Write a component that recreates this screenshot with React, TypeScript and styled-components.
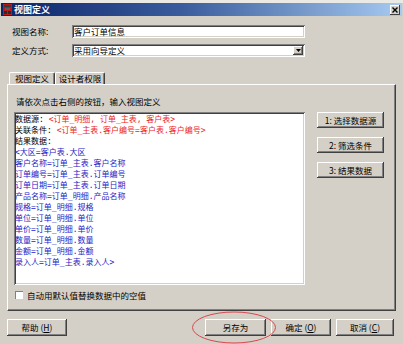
import React from "react";
import styled, { createGlobalStyle } from "styled-components";

const Global = createGlobalStyle`
  html, body { margin: 0; padding: 0; background: #d4d0c8; overflow: hidden; }
  * { box-sizing: border-box; }
`;

const FONT = `"Noto Sans CJK SC", "Liberation Sans", sans-serif`;
const MONO_CJK = `"DejaVu Sans Mono", "Noto Sans CJK SC", monospace`;

const Window = styled.div`
  position: relative;
  width: 403px;
  height: 344px;
  background: #d4d0c8;
  display: flex;
  flex-direction: column;
  font-family: ${FONT};
  font-size: 8.5px;
  color: #000;
  overflow: hidden;
`;

const TopStrip = styled.div`
  height: 3px;
  background: #ebe9e4;
`;

const TitleBar = styled.div`
  height: 13px;
  margin: 0 1px;
  background: linear-gradient(to right, #0a246a 0%, #3a5c9c 45%, #a6caf0 100%);
  display: flex;
  align-items: center;
  padding: 0 2px 0 2px;
`;

const TitleText = styled.span`
  color: #fff;
  font-weight: bold;
  font-size: 9px;
  line-height: 13px;
  margin-left: 2px;
  flex: 1;
`;

const CloseBtn = styled.div`
  width: 10px;
  height: 10px;
  background: #d4d0c8;
  box-shadow: inset -1px -1px #404040, inset 1px 1px #fff;
  display: flex;
  align-items: center;
  justify-content: center;
`;

const Form = styled.div`
  margin-top: 9px;
  padding-left: 12px;
  display: flex;
  flex-direction: column;
  gap: 6px;
`;

const FormRow = styled.div`
  display: flex;
  align-items: center;
  height: 13px;
`;

const Label = styled.span`
  width: 60px;
  line-height: 13px;
`;

const Field = styled.div`
  position: relative;
  width: 233px;
  height: 13px;
  background: #fff;
  box-shadow: inset 1px 1px #808080, inset -1px -1px #fff, inset 2px 2px #404040,
    inset -2px -2px #d4d0c8;
  padding: 0 2px;
  line-height: 13px;
  display: flex;
  align-items: center;
`;

const FieldText = styled.span`
  flex: 1;
`;

const DropBtn = styled.div`
  width: 10px;
  height: 9px;
  background: #d4d0c8;
  box-shadow: inset -1px -1px #404040, inset 1px 1px #fff, inset -2px -2px #808080;
  display: flex;
  align-items: center;
  justify-content: center;
`;

const Tabs = styled.div`
  margin-top: 15px;
  margin-left: 9px;
  display: flex;
  height: 12px;
`;

const Tab = styled.div<{ $w: number }>`
  width: ${(p) => p.$w}px;
  height: 12px;
  border-top: 1px solid #fff;
  border-left: 1px solid #fff;
  border-right: 1px solid #404040;
  box-shadow: inset -1px 0 #808080;
  border-radius: 2px 2px 0 0;
  display: flex;
  align-items: center;
  justify-content: center;
  line-height: 11px;
  background: #d4d0c8;
`;

const Panel = styled.div`
  margin: 0 7px;
  height: 227px;
  border: 1px solid;
  border-color: #fff #404040 #404040 #fff;
  box-shadow: inset -1px -1px #808080;
  padding: 11px 0 0 6px;
  display: flex;
  flex-direction: column;
`;

const Instruction = styled.div`
  padding-left: 2px;
  line-height: 11px;
  height: 11px;
`;

const Main = styled.div`
  margin-top: 5px;
  display: flex;
  align-items: flex-start;
`;

const TextArea = styled.div`
  width: 291px;
  height: 173px;
  background: #fff;
  box-shadow: inset 1px 1px #808080, inset -1px -1px #fff, inset 2px 2px #404040,
    inset -2px -2px #d4d0c8;
  padding: 2px 1px;
  font-family: ${MONO_CJK};
  font-size: 8px;
  line-height: 11px;
  overflow: hidden;
`;

const Line = styled.div`
  height: 11px;
  white-space: pre;
`;

const Red = styled.span`
  color: #ec2424;
`;

const Blue = styled.span`
  color: #2424c8;
`;

const SideButtons = styled.div`
  margin-left: 12px;
  display: flex;
  flex-direction: column;
  gap: 9px;
`;

const Button = styled.div<{ $w: number; $h?: number }>`
  width: ${(p) => p.$w}px;
  height: ${(p) => p.$h ?? 16}px;
  background: #d4d0c8;
  box-shadow: inset -1px -1px #404040, inset 1px 1px #fff, inset -2px -2px #808080;
  display: flex;
  align-items: center;
  justify-content: center;
  line-height: 11px;
  white-space: pre;
`;

const CheckRow = styled.div`
  margin-top: 5px;
  padding-left: 1px;
  display: flex;
  align-items: center;
  gap: 4px;
  height: 9px;
`;

const CheckBox = styled.div`
  width: 8px;
  height: 8px;
  background: #fff;
  box-shadow: inset 1px 1px #808080, inset -1px -1px #fff;
`;

const Footer = styled.div`
  margin-top: 8px;
  padding: 0 9px 0 7px;
  display: flex;
  align-items: center;
`;

const RightGroup = styled.div`
  margin-left: auto;
  display: flex;
  gap: 5px;
`;

const Ellipse = styled.svg`
  position: absolute;
  left: 191px;
  top: 311px;
`;

const AppIcon = () => (
  <svg width="9" height="11" viewBox="0 0 9 11">
    <rect x="0" y="0" width="9" height="11" fill="#c01818" />
    <rect x="1" y="1" width="7" height="2" fill="#3a3a3a" />
    <rect x="2" y="4" width="5" height="2" fill="#5a5a5a" />
    <rect x="1" y="7" width="3" height="3" fill="#2a2a2a" />
    <rect x="5" y="7" width="3" height="3" fill="#2a2a2a" />
  </svg>
);

const blueLines = [
  "<大区=客户表.大区",
  "客户名称=订单_主表.客户名称",
  "订单编号=订单_主表.订单编号",
  "订单日期=订单_主表.订单日期",
  "产品名称=订单_明细.产品名称",
  "规格=订单_明细.规格",
  "单位=订单_明细.单位",
  "单价=订单_明细.单价",
  "数量=订单_明细.数量",
  "金额=订单_明细.金额",
  "录入人=订单_主表.录入人>",
];

export default function App() {
  return (
    <>
      <Global />
      <Window>
        <TopStrip />
        <TitleBar>
          <AppIcon />
          <TitleText>视图定义</TitleText>
          <CloseBtn>
            <svg width="6" height="6" viewBox="0 0 6 6">
              <path d="M0.5 0.5 L5.5 5.5 M5.5 0.5 L0.5 5.5" stroke="#000" strokeWidth="1.4" />
            </svg>
          </CloseBtn>
        </TitleBar>

        <Form>
          <FormRow>
            <Label>视图名称:</Label>
            <Field>
              <FieldText>客户订单信息</FieldText>
            </Field>
          </FormRow>
          <FormRow>
            <Label>定义方式:</Label>
            <Field>
              <FieldText>采用向导定义</FieldText>
              <DropBtn>
                <svg width="5" height="3" viewBox="0 0 5 3">
                  <path d="M0 0 H5 L2.5 3 Z" fill="#000" />
                </svg>
              </DropBtn>
            </Field>
          </FormRow>
        </Form>

        <Tabs>
          <Tab $w={46}>视图定义</Tab>
          <Tab $w={50}>设计者权限</Tab>
        </Tabs>

        <Panel>
          <Instruction>请依次点击右侧的按钮，输入视图定义</Instruction>
          <Main>
            <TextArea>
              <Line>
                数据源: <Red>&lt;订单_明细, 订单_主表, 客户表&gt;</Red>
              </Line>
              <Line>
                关联条件: <Red>&lt;订单_主表.客户编号=客户表.客户编号&gt;</Red>
              </Line>
              <Line>结果数据:</Line>
              {blueLines.map((l) => (
                <Line key={l}>
                  <Blue>{l}</Blue>
                </Line>
              ))}
            </TextArea>
            <SideButtons>
              <Button $w={67}>1: 选择数据源</Button>
              <Button $w={67}>2: 筛选条件</Button>
              <Button $w={67}>3: 结果数据</Button>
            </SideButtons>
          </Main>
          <CheckRow>
            <CheckBox />
            <span>自动用默认值替换数据中的空值</span>
          </CheckRow>
        </Panel>

        <Footer>
          <Button $w={60} $h={17}>
            帮助 (<u>H</u>)
          </Button>
          <RightGroup>
            <Button $w={61} $h={17}>另存为</Button>
            <Button $w={60} $h={17}>
              确定 (<u>O</u>)
            </Button>
            <Button $w={58} $h={17}>
              取消 (<u>C</u>)
            </Button>
          </RightGroup>
        </Footer>

        <Ellipse width="86" height="33" viewBox="0 0 86 33">
          <ellipse cx="43" cy="16.5" rx="41.5" ry="15.5" fill="none" stroke="#d8484f" strokeWidth="1" />
        </Ellipse>
      </Window>
    </>
  );
}
